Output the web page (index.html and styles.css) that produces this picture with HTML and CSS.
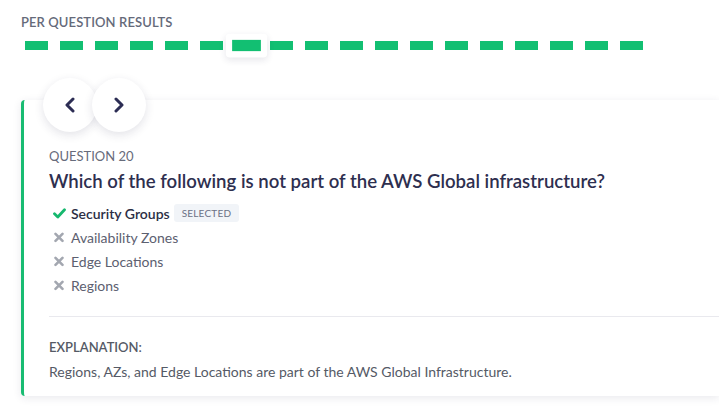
FILE: index.html
```
<!DOCTYPE html>
<html>
<head>
<meta charset="utf-8">
<link rel="stylesheet" href="styles.css">
</head>
<body>
<div class="page">
  <div class="section-title">PER QUESTION RESULTS</div>
  <div class="dots">
    <span class="dot"><i></i></span><span class="dot"><i></i></span><span class="dot"><i></i></span>
    <span class="dot"><i></i></span><span class="dot"><i></i></span><span class="dot"><i></i></span>
    <span class="dot active"><i></i></span>
    <span class="dot"><i></i></span><span class="dot"><i></i></span><span class="dot"><i></i></span>
    <span class="dot"><i></i></span><span class="dot"><i></i></span><span class="dot"><i></i></span>
    <span class="dot"><i></i></span><span class="dot"><i></i></span><span class="dot"><i></i></span>
    <span class="dot"><i></i></span><span class="dot"><i></i></span>
  </div>
  <div class="card">
    <div class="nav">
      <button class="circle prev"><svg width="12" height="16" viewBox="0 0 12 16"><path d="M9 2 L3 8 L9 14" fill="none" stroke="#2c2d54" stroke-width="3" stroke-linecap="round" stroke-linejoin="round"/></svg></button>
      <button class="circle next"><svg width="12" height="16" viewBox="0 0 12 16"><path d="M3 2 L9 8 L3 14" fill="none" stroke="#2c2d54" stroke-width="3" stroke-linecap="round" stroke-linejoin="round"/></svg></button>
    </div>
    <div class="q-label">QUESTION 20</div>
    <div class="q-text">Which of the following is not part of the AWS Global infrastructure?</div>
    <ul class="options">
      <li class="opt correct"><svg class="ico" width="13" height="11" viewBox="0 0 13 11"><path d="M1.5 5.8 L4.8 9 L11.5 1.8" fill="none" stroke="#16b86e" stroke-width="2.8" stroke-linecap="round" stroke-linejoin="round"/></svg><span class="opt-text">Security Groups</span><span class="badge">SELECTED</span></li>
      <li class="opt"><svg class="ico" width="13" height="11" viewBox="0 0 13 11"><path d="M2.5 1.8 L9.5 8.8 M9.5 1.8 L2.5 8.8" fill="none" stroke="#a3a7b0" stroke-width="2.6" stroke-linecap="round"/></svg><span class="opt-text">Availability Zones</span></li>
      <li class="opt"><svg class="ico" width="13" height="11" viewBox="0 0 13 11"><path d="M2.5 1.8 L9.5 8.8 M9.5 1.8 L2.5 8.8" fill="none" stroke="#a3a7b0" stroke-width="2.6" stroke-linecap="round"/></svg><span class="opt-text">Edge Locations</span></li>
      <li class="opt"><svg class="ico" width="13" height="11" viewBox="0 0 13 11"><path d="M2.5 1.8 L9.5 8.8 M9.5 1.8 L2.5 8.8" fill="none" stroke="#a3a7b0" stroke-width="2.6" stroke-linecap="round"/></svg><span class="opt-text">Regions</span></li>
    </ul>
    <div class="divider"></div>
    <div class="exp-label">EXPLANATION:</div>
    <div class="exp-text">Regions, AZs, and Edge Locations are part of the AWS Global Infrastructure.</div>
  </div>
</div>
</body>
</html>
```
FILE: styles.css
```
* { box-sizing: border-box; }
html, body { margin: 0; padding: 0; background: #ffffff; }
body {
  font-family: "Lato", "Open Sans", sans-serif;
  width: 719px;
  height: 408px;
  overflow: hidden;
}
.page {
  padding: 13px 0 0 21px;
}
.section-title {
  font-size: 13px;
  line-height: 18px;
  color: #656a7a;
  font-weight: 600;
  letter-spacing: 0.1px;
}
.dots {
  display: flex;
  gap: 2px;
  margin-top: 5px;
  margin-left: -1px;
}
.dot {
  display: block;
  padding: 5px 5px;
  border-radius: 3px;
}
.dot i {
  display: block;
  width: 23px;
  height: 9px;
  background: #12bf72;
}
.dot.active {
  background: #fff;
  transform: scale(1.25);
  box-shadow: 0 2px 6px rgba(40, 40, 80, 0.12);
}
.card {
  position: relative;
  margin-top: 45px;
  border-left: 3px solid #19bc72;
  border-radius: 4px 0 0 4px;
  background: #fff;
  box-shadow: 0 2px 8px rgba(40, 40, 80, 0.10);
  padding: 47px 0 15px 25px;
}
.nav {
  position: absolute;
  top: -22px;
  left: 19px;
  width: 110px;
  height: 54px;
}
.circle {
  position: absolute;
  top: 0;
  width: 54px;
  height: 54px;
  border-radius: 50%;
  border: none;
  background: #fff;
  box-shadow: 0 3px 10px rgba(40, 40, 80, 0.13);
  display: flex;
  align-items: center;
  justify-content: center;
  padding: 0;
}
.circle.prev { left: 0; }
.circle.next { left: 49px; }
.q-label {
  font-size: 13px;
  line-height: 18px;
  color: #676b7b;
  font-weight: 400;
}
.q-text {
  margin-top: 4px;
  font-size: 18.6px;
  line-height: 24px;
  color: #2e2f4f;
  font-weight: 600;
}
.options {
  list-style: none;
  margin: 8px 0 0 0;
  padding: 0;
}
.opt {
  display: flex;
  align-items: center;
  height: 24px;
  font-size: 14px;
  color: #5c6070;
}
.ico {
  margin-left: 4px;
  margin-right: 5px;
  flex: none;
}
.opt.correct .opt-text {
  color: #2c2f45;
  font-weight: 600;
}
.badge {
  margin-left: 4px;
  background: #f1f4f8;
  color: #6b7185;
  font-size: 10px;
  line-height: 18px;
  padding: 0 8px;
  border-radius: 3px;
  letter-spacing: 0.2px;
}
.divider {
  margin-top: 19px;
  height: 1px;
  background: #e9e9ee;
}
.exp-label {
  margin-top: 21px;
  font-size: 13px;
  line-height: 18px;
  color: #555a66;
  font-weight: 600;
}
.exp-text {
  margin-top: 7px;
  font-size: 14px;
  line-height: 18px;
  color: #555a66;
}
```
